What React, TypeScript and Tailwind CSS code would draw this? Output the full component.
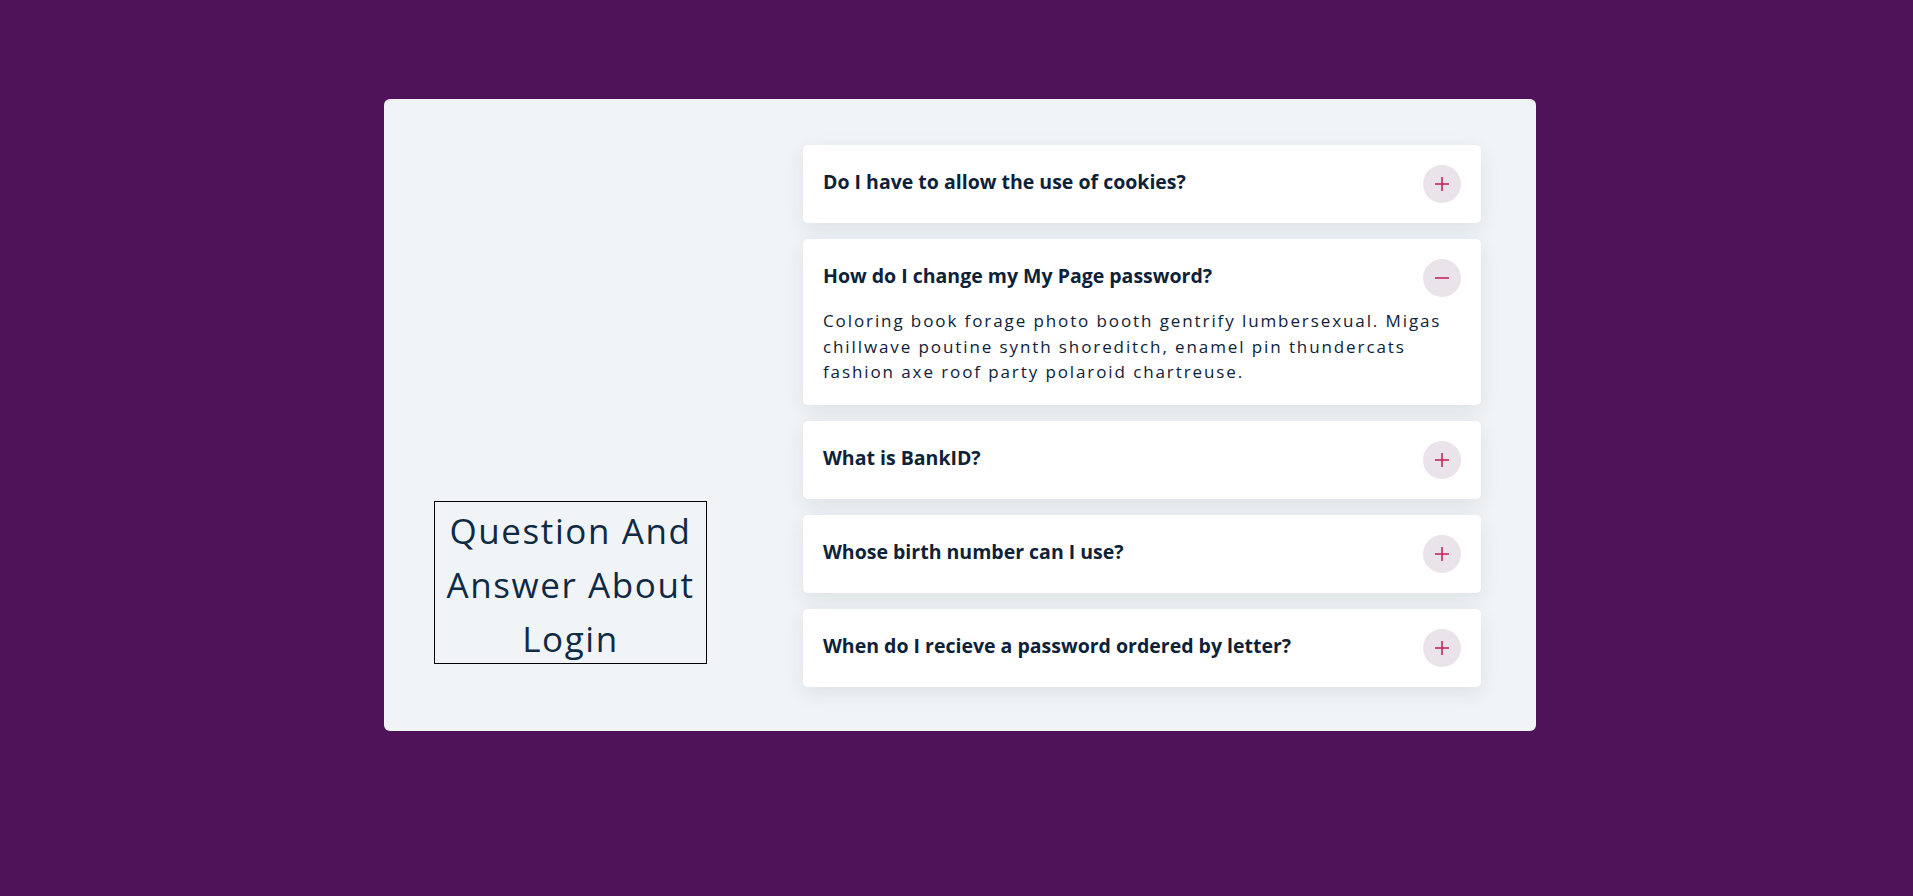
import React, { useState } from "react";

const items = [
  { q: "Do I have to allow the use of cookies?", a: "Coloring book forage photo booth gentrify lumbersexual. Migas chillwave poutine synth shoreditch, enamel pin thundercats fashion axe roof party polaroid chartreuse." },
  { q: "How do I change my My Page password?", a: "Coloring book forage photo booth gentrify lumbersexual. Migas chillwave poutine synth shoreditch, enamel pin thundercats fashion axe roof party polaroid chartreuse." },
  { q: "What is BankID?", a: "Coloring book forage photo booth gentrify lumbersexual. Migas chillwave poutine synth shoreditch, enamel pin thundercats fashion axe roof party polaroid chartreuse." },
  { q: "Whose birth number can I use?", a: "Coloring book forage photo booth gentrify lumbersexual. Migas chillwave poutine synth shoreditch, enamel pin thundercats fashion axe roof party polaroid chartreuse." },
  { q: "When do I recieve a password ordered by letter?", a: "Coloring book forage photo booth gentrify lumbersexual. Migas chillwave poutine synth shoreditch, enamel pin thundercats fashion axe roof party polaroid chartreuse." },
];

function Icon({ open }: { open: boolean }) {
  return (
    <div className="w-[38px] h-[38px] rounded-full bg-[#eae3ea] flex items-center justify-center shrink-0">
      <svg width="16" height="16" viewBox="0 0 16 16">
        <line x1="1" y1="8" x2="15" y2="8" stroke="#c2295c" strokeWidth="1.6" />
        {!open && <line x1="8" y1="1" x2="8" y2="15" stroke="#c2295c" strokeWidth="1.6" />}
      </svg>
    </div>
  );
}

export default function App() {
  const [open, setOpen] = useState<number>(1);
  return (
    <div className="min-h-[896px] w-full bg-[#4e1359] pt-[99px]" style={{ fontFamily: "'Open Sans', 'Noto Sans', sans-serif" }}>
      <div className="ml-[384px] w-[1152px] h-[632px] bg-[#f0f4f7] rounded-[6px] flex items-end pt-[46px] pb-[47px] pl-[50px]">
        <div className="mb-[20px] w-[273px] h-[163px] border border-black text-center text-[35px] leading-[54px] tracking-[1.6px] text-[#0f2a44] pt-[2px]">
          Question And Answer About Login
        </div>
        <div className="ml-[96px] w-[678px] flex flex-col gap-4 self-start">
          {items.map((it, i) => (
            <div key={i} className="bg-white rounded-[5px] shadow-[0_6px_20px_rgba(30,40,60,0.09)] px-5 py-5">
              <button onClick={() => setOpen(open === i ? -1 : i)} className="w-full flex items-center justify-between text-left cursor-pointer">
                <span className="text-[19.5px] font-bold text-[#0d2238] -mt-[4px]">{it.q}</span>
                <Icon open={open === i} />
              </button>
              {open === i && (
                <p className="mt-[11px] pr-2 text-[17px] leading-[25.6px] tracking-[1.9px] text-[#0d2238]">{it.a}</p>
              )}
            </div>
          ))}
        </div>
      </div>
    </div>
  );
}
